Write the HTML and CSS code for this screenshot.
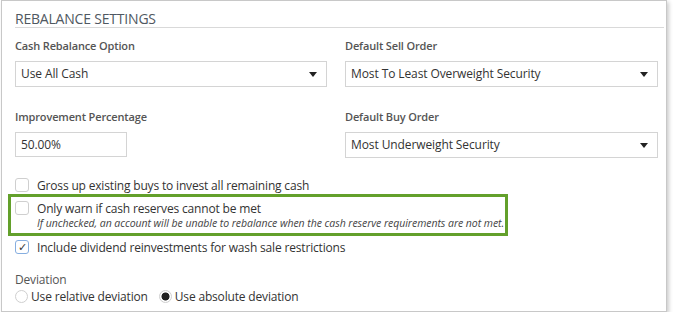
FILE: index.html
```html
<!DOCTYPE html>
<html lang="en">
<head>
    <meta charset="UTF-8">
    <title>Rebalance Settings</title>
    <link rel="stylesheet" href="styles.css">
</head>
<body>
    <div class="panel">
        <h2 class="panel-title">REBALANCE SETTINGS</h2>

        <div class="field-grid">
            <div class="field">
                <label>Cash Rebalance Option</label>
                <div class="select">Use All Cash<span class="arrow"></span></div>
            </div>
            <div class="field">
                <label>Default Sell Order</label>
                <div class="select">Most To Least Overweight Security<span class="arrow"></span></div>
            </div>
            <div class="field">
                <label>Improvement Percentage</label>
                <div class="text-input">50.00%</div>
            </div>
            <div class="field">
                <label>Default Buy Order</label>
                <div class="select">Most Underweight Security<span class="arrow"></span></div>
            </div>
        </div>

        <div class="checks">
            <div class="check-row first">
                <span class="box"></span>
                <span>Gross up existing buys to invest all remaining cash</span>
            </div>
            <div class="highlight">
                <div class="check-row">
                    <span class="box"></span>
                    <span>Only warn if cash reserves cannot be met</span>
                </div>
                <div class="hint">If unchecked, an account will be unable to rebalance when the cash reserve requirements are not met.</div>
            </div>
            <div class="check-row last">
                <span class="box checked">&#10003;</span>
                <span>Include dividend reinvestments for wash sale restrictions</span>
            </div>
        </div>

        <div class="deviation">
            <div class="dev-label">Deviation</div>
            <div class="radios">
                <span class="radio"></span><span>Use relative deviation</span>
                <span class="radio on"></span><span>Use absolute deviation</span>
            </div>
        </div>
    </div>
</body>
</html>
```

FILE: styles.css
```css
body {
    margin: 0;
    background-color: white;
    font-family: "Open Sans", sans-serif;
    font-size: 12px;
    letter-spacing: -0.17px;
    color: #333;
}

.panel {
    box-sizing: border-box;
    width: 666px;
    height: 312px;
    margin-left: 1px;
    padding: 0 2px 0 13px;
    border: 1px solid #c8c8c8;
    background-color: white;
    box-shadow: 2px 2px 4px rgba(0,0,0,0.2);
}

.panel-title {
    margin: 0;
    padding-top: 9px;
    height: 17px;
    font-size: 14px;
    font-weight: normal;
    letter-spacing: -0.2px;
    line-height: 17px;
    color: #4f5861;
    border-bottom: 1px solid #d9d9d9;
}

.field-grid {
    display: grid;
    grid-template-columns: 312px 313px;
    column-gap: 18px;
    row-gap: 21px;
    margin-top: 9px;
}

.field label {
    display: block;
    font-size: 11px;
    font-weight: 600;
    letter-spacing: -0.15px;
    color: #555;
    line-height: 18px;
    margin-bottom: 6px;
}

.select, .text-input {
    box-sizing: border-box;
    position: relative;
    height: 26px;
    line-height: 24px;
    padding-left: 5px;
    border: 1px solid #d4d4d4;
    letter-spacing: -0.1px;
}

.text-input {
    width: 112px;
    height: 25px;
}

.arrow {
    position: absolute;
    right: 9px;
    top: 10px;
    border-left: 4px solid transparent;
    border-right: 4px solid transparent;
    border-top: 5px solid #222;
}

.checks {
    margin-top: 19px;
}

.check-row {
    display: flex;
    align-items: center;
    gap: 8px;
    height: 16px;
}

.check-row.first {
    margin-bottom: 1px;
}

.check-row.last {
    margin-top: 3px;
}

.box {
    box-sizing: border-box;
    width: 14px;
    height: 14px;
    border: 1px solid #cfcfcf;
    border-radius: 3px;
    font-size: 11px;
    line-height: 12px;
    text-align: center;
}

.box.checked {
    border-color: #86aee0;
    color: #333;
}

.highlight {
    box-sizing: border-box;
    width: 500px;
    margin-left: -7px;
    padding: 3px 0 3px 4px;
    border: 3px solid #63a02b;
}

.hint {
    margin-left: 22px;
    font-size: 10.5px;
    font-style: italic;
    letter-spacing: -0.05px;
    line-height: 14px;
    white-space: nowrap;
    color: #444;
}

.deviation {
    margin-top: 16px;
}

.dev-label {
    color: #555;
    line-height: 18px;
}

.radios {
    display: flex;
    align-items: center;
    height: 16px;
    margin-top: -1px;
}

.radio {
    box-sizing: border-box;
    width: 13px;
    height: 13px;
    border: 1px solid #cfcfcf;
    border-radius: 50%;
    margin-right: 3px;
}

.radio.on {
    margin-left: 11px;
    background: radial-gradient(circle, #222 0 3.6px, white 4.4px);
}
```
